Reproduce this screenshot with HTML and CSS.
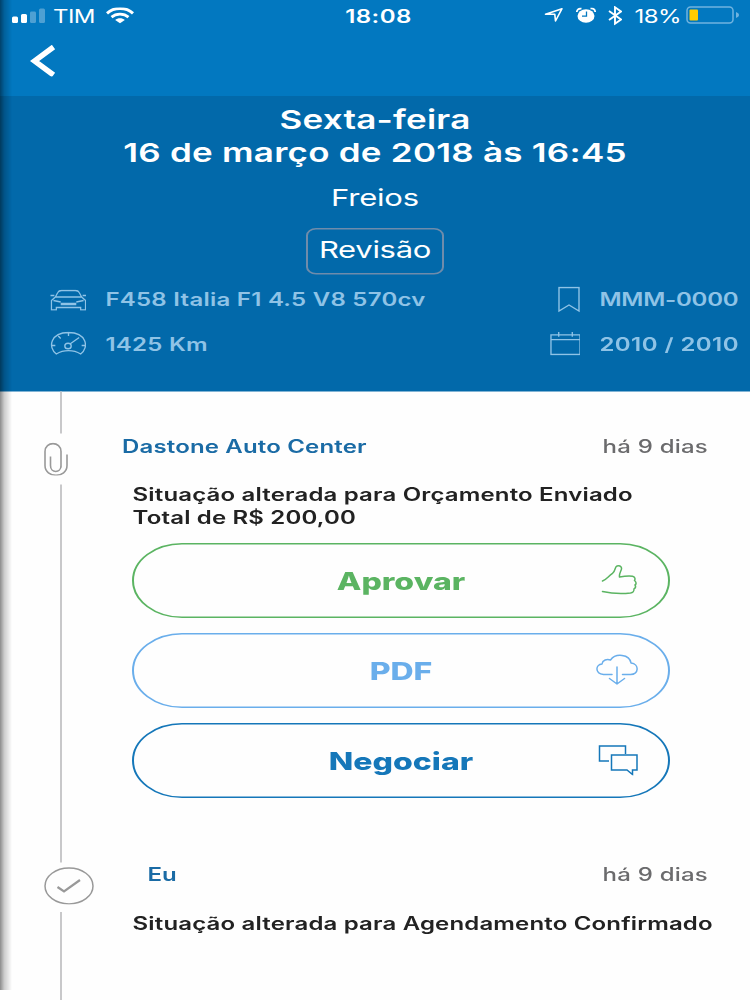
FILE: index.html
```html
<!DOCTYPE html>
<html lang="pt-BR">
<head>
    <meta charset="UTF-8">
    <meta name="viewport" content="width=device-width, initial-scale=1.0">
    <title>Agendamento</title>
    <link rel="stylesheet" href="styles.css">
</head>
<body>

<div class="screen">
    <div class="top">
        <div class="status-bar">
            <div class="status-left">
                <svg class="signal" viewBox="0 0 34 16" preserveAspectRatio="none" fill="#fff">
                    <rect x="0" y="9" width="6" height="6.5" rx="1.5"/>
                    <rect x="9" y="6.5" width="6" height="9" rx="1.5"/>
                    <rect x="18" y="4" width="6" height="11.5" rx="1.5" opacity=".3"/>
                    <rect x="27" y="1" width="6" height="14.5" rx="1.5" opacity=".3"/>
                </svg>
                <span class="carrier">TIM</span>
                <svg class="wifi" viewBox="0 0 28 16" preserveAspectRatio="none" fill="none" stroke="#fff">
                    <path d="M1 5.8C8-.6 20-.6 27 5.8" stroke-width="3"/>
                    <path d="M5.5 9.6c4.6-4 12.4-4 17 0" stroke-width="2.8"/>
                    <path d="M9.2 12.5c2.4-2.4 7.2-2.4 9.6 0L14 15.8z" fill="#fff" stroke="none"/>
                </svg>
            </div>
            <span class="time">18:08</span>
            <div class="status-right">
                <svg class="location" viewBox="0 0 20 15" preserveAspectRatio="none" fill="none" stroke="#fff" stroke-width="1.6" stroke-linejoin="round">
                    <path d="M1.5 6.7L18 1.2 11.5 13.5 10.8 6.8z"/>
                </svg>
                <svg class="alarm" viewBox="0 0 20 16" preserveAspectRatio="none">
                    <ellipse cx="10" cy="8.5" rx="8.5" ry="6.8" fill="#fff"/>
                    <path d="M.8 4.5C1 2 3 .8 5.5 1M19.2 4.5C19 2 17 .8 14.5 1" fill="none" stroke="#fff" stroke-width="1.8"/>
                    <path d="M10.5 4v4.700H6" fill="none" stroke="#0278c0" stroke-width="1.3"/>
                </svg>
                <svg class="bluetooth" viewBox="0 0 15 19" preserveAspectRatio="none" fill="none" stroke="#fff" stroke-width="1.9">
                    <path d="M1 5l12 8.5-6 4.2V1.3l6 4.2L1 14"/>
                </svg>
                <span class="percent">18%</span>
                <svg class="battery" viewBox="0 0 54 18" preserveAspectRatio="none">
                    <rect x="1" y="1" width="46" height="16" rx="3.5" fill="none" stroke="#70b3df" stroke-width="1.5"/>
                    <rect x="3.5" y="3.5" width="8.5" height="11" rx="1" fill="#fc0"/>
                    <path d="M50 6c4 1.5 4 4.5 0 6z" fill="#70b3df"/>
                </svg>
            </div>
        </div>
        <svg class="back" viewBox="0 0 25 32" preserveAspectRatio="none" fill="none" stroke="#fff" stroke-width="5.5">
            <path d="M23.5 2L4.5 16l19 14"/>
        </svg>
    </div>

    <div class="header">
        <h1><span>Sexta-feira</span><br><span>16 de março de 2018 às 16:45</span></h1>
        <p class="service">Freios</p>
        <div class="tag"><span>Revisão</span></div>
        <div class="info">
            <div class="info-icon">
                <svg class="car" viewBox="0 0 38 22" preserveAspectRatio="none" fill="none" stroke="currentColor" stroke-width="1.3">
                    <path d="M5.5 7.500L8 3Q9 1 12 1h14q3 0 4 2l2.500 4.500M5.500 7.500h27M5.500 7.500L1.500 11v9.500h5V18h25v2.500h5V11l-4-3.500M.5 6h4M33.500 6h4M3.500 11l7.500 1.500M34.500 11L27 12.500"/>
                    <path d="M11 14.500h16" stroke-width="2.4"/>
                </svg>
            </div>
            <span class="model">F458 Italia F1 4.5 V8 570cv</span>
            <div class="info-icon right">
                <svg class="bookmark" viewBox="0 0 22 26" preserveAspectRatio="none" fill="none" stroke="currentColor" stroke-width="1.4">
                    <path d="M1 1h20v23.5l-10-6-10 6z"/>
                </svg>
            </div>
            <span class="plate">MMM-0000</span>

            <div class="info-icon">
                <svg class="gauge" viewBox="0 0 38 24" preserveAspectRatio="none" fill="none" stroke="currentColor" stroke-width="1.4">
                    <path d="M6.500 22.500C-2.500 16 .5 1 19 1s21.500 15 12.500 21.500C24 18 14 18 6.500 22.500zM19 1v3.500M8.500 4.500l2.500 2.500M1.500 14h4M32.500 14h4M20.500 12.500L30 6"/>
                    <ellipse cx="18.5" cy="14.5" rx="3.3" ry="2.8"/>
                </svg>
            </div>
            <span class="km">1425 Km</span>
            <div class="info-icon right">
                <svg class="calendar" viewBox="0 0 32 25" preserveAspectRatio="none" fill="none" stroke="currentColor" stroke-width="1.4">
                    <path d="M1 3.500h30V24H1zM1 8.500h30M9 .5v5M23 .5v5"/>
                </svg>
            </div>
            <span class="year">2010 / 2010</span>
        </div>
    </div>

    <div class="timeline">
        <div class="item first">
            <div class="rail">
                <div class="line start"></div>
                <div class="rail-icon">
                    <svg class="clip" viewBox="0 0 24 34" preserveAspectRatio="none" fill="none" stroke="#999" stroke-width="1.6">
                        <path d="M17 25V9c0-10.500-16-10.500-16 0v14c0 13 22 13 22 0V12M17 23c0 8-10.500 8-10.500 0V14"/>
                    </svg>
                </div>
                <div class="line end"></div>
            </div>
            <div class="content">
                <div class="row">
                    <span class="author">Dastone Auto Center</span>
                    <span class="when">há 9 dias</span>
                </div>
                <p class="message"><span>Situação alterada para Orçamento Enviado</span><br><span>Total de R$ 200,00</span></p>
                <div class="actions">
                    <button class="btn approve">
                        <span>Aprovar</span>
                        <svg viewBox="0 0 42 32" preserveAspectRatio="none" fill="none" stroke="currentColor" stroke-width="1.5" stroke-linecap="round" stroke-linejoin="round">
                            <path d="M6.500 17C11 15.500 12 12.500 16.500 9.500 19.500 7.500 18.500 3 21 2c3.500-1 5.500 1.500 4 4.500-.6 1.500-2 4-1.500 6.500 5-.8 9-1.200 13-.7 2.500.4 3 2.700 2 4.200 2 1.500 2 3.500.5 4.500 1 1.600.5 3-1 4 0 2.500-.5 3.500-3.500 4-9 1-19 .5-28-1.500"/>
                        </svg>
                    </button>
                    <button class="btn pdf">
                        <span>PDF</span>
                        <svg viewBox="0 0 42 32" preserveAspectRatio="none" fill="none" stroke="currentColor" stroke-width="1.5" stroke-linecap="round" stroke-linejoin="round">
                            <path d="M16 20.500H7.500C-1.500 19.500-.5 10.500 6 10 6.500 6 11 4.500 14.500 6c5-7 19-6 20.500 3 8.500 1 8 11.500-.5 11.500h-8M21 13v17M13.500 24.500L21 30l7.500-5.500"/>
                        </svg>
                    </button>
                    <button class="btn talk">
                        <span>Negociar</span>
                        <svg viewBox="0 0 42 32" preserveAspectRatio="none" fill="none" stroke="currentColor" stroke-width="1.5">
                            <path d="M13 17H3.500V2h26v8M15.500 11H41v15h-4.500v4.500L31 26H15.500z"/>
                        </svg>
                    </button>
                </div>
            </div>
        </div>

        <div class="item second">
            <div class="rail">
                <div class="line start"></div>
                <div class="rail-icon">
                    <svg class="check" viewBox="0 0 50 38" preserveAspectRatio="none" fill="none" stroke="#999" stroke-width="1.5">
                        <ellipse cx="25" cy="19" rx="24" ry="18"/>
                        <path d="M13.500 20l6.500 4.500L36 13" stroke-width="2.2"/>
                    </svg>
                </div>
                <div class="line end"></div>
            </div>
            <div class="content">
                <div class="row">
                    <span class="author me">Eu</span>
                    <span class="when">há 9 dias</span>
                </div>
                <p class="message"><span>Situação alterada para Agendamento Confirmado</span></p>
            </div>
        </div>
    </div>
    <div class="edge"></div>
</div>

</body>
</html>
```
FILE: styles.css
```css
body {
    margin: 0;
    height: 1000px;
    overflow: hidden;
    background: #fefefe;
    font-family: Inter, "Liberation Sans", sans-serif;
}

/* 375pt wide phone layout, stretched to fill the window */
.screen {
    position: relative;
    width: 375px;
    height: 666.67px;
    display: flex;
    flex-direction: column;
    overflow: hidden;
    transform: scale(2, 1.5);
    transform-origin: 0 0;
}

svg {
    display: block;
    flex: none;
}

h1, p {
    margin: 0;
}

span {
    white-space: nowrap;
}

.top {
    height: 64px;
    background: #0278c0;
    flex: none;
}

.status-bar {
    display: flex;
    align-items: center;
    justify-content: space-between;
    height: 20.5px;
    padding: 0 5.5px 0 6px;
    color: #fff;
    font-size: 12px;
}

.status-left, .status-right {
    display: flex;
    align-items: center;
    width: 157px;
}

.status-right {
    justify-content: flex-end;
    width: 154px;
}

.signal {
    width: 17px;
    height: 10.67px;
}

.carrier {
    margin: 0 6px 0 3.5px;
    letter-spacing: -0.3px;
}

.wifi {
    width: 14px;
    height: 10.67px;
}

.time {
    font-weight: 600;
    letter-spacing: 0.2px;
}

.location {
    width: 10px;
    height: 10px;
    margin-right: 6.3px;
}

.alarm {
    width: 10px;
    height: 10.67px;
    margin-right: 5.5px;
}

.bluetooth {
    width: 7.5px;
    height: 12.67px;
    margin-right: 6px;
}

.percent {
    margin-right: 2px;
    letter-spacing: -0.3px;
}

.battery {
    width: 27px;
    height: 12px;
}

.back {
    width: 12.5px;
    height: 21.33px;
    margin: 9.5px 0 0 15px;
}

.header {
    box-sizing: border-box;
    height: 196.67px;
    padding-top: 5.4px;
    background: #0269aa;
    color: #fff;
    text-align: center;
    flex: none;
}

h1 {
    font-size: 17.5px;
    font-weight: 600;
    letter-spacing: 0.12px;
    line-height: 21.67px;
}

.service {
    margin-top: 8.6px;
    font-size: 15.5px;
    letter-spacing: -0.1px;
    line-height: 22px;
}

.tag {
    box-sizing: border-box;
    width: 68.5px;
    height: 31.33px;
    margin: 8.4px auto 0;
    border: 1px solid #6f8cab;
    border-radius: 5px;
    font-size: 15.5px;
    letter-spacing: -0.15px;
    line-height: 28.4px;
}

.info {
    display: grid;
    grid-template-columns: 28px 220px 27px 75px;
    grid-auto-rows: 29.2px;
    align-items: center;
    margin-top: 2.3px;
    padding-left: 24.7px;
    color: #8fc3e6;
    font-size: 12px;
    font-weight: 600;
    letter-spacing: 0.13px;
    text-align: left;
}

.plate {
    letter-spacing: -0.12px;
}

.year {
    letter-spacing: 0.22px;
}

.info-icon.right {
    display: flex;
    justify-content: flex-end;
    padding-right: 9.7px;
}

.car {
    width: 18.5px;
    height: 14.67px;
}

.gauge {
    width: 18.5px;
    height: 16px;
}

.bookmark {
    width: 11px;
    height: 17.33px;
}

.calendar {
    width: 15.5px;
    height: 16px;
}

.timeline {
    flex: 1;
    display: flex;
    flex-direction: column;
}

.item {
    display: flex;
}

.first {
    height: 299.33px;
    flex: none;
}

.second {
    flex: 1;
}

.rail {
    display: flex;
    flex-direction: column;
    width: 61px;
    flex: none;
}

.line {
    width: 1px;
    margin-left: 30.3px;
    background: #c8c8ca;
}

.line.start {
    height: 28.67px;
}

.second .line.start {
    height: 14.67px;
}

.line.end {
    flex: 1;
}

.rail-icon {
    display: flex;
    align-items: center;
    height: 33.33px;
    padding-left: 21.8px;
}

.second .rail-icon {
    height: 32px;
    padding-bottom: 1.5px;
}

.clip {
    width: 12px;
    height: 22.67px;
}

.check {
    width: 25px;
    height: 25.33px;
}

.content {
    width: 293px;
    padding-top: 27px;
}

.second .content {
    padding-top: 13px;
}

.row {
    display: flex;
    justify-content: space-between;
    font-size: 12px;
    font-weight: 600;
    letter-spacing: 0.08px;
    line-height: 20px;
}

.author {
    color: #1a6ba5;
}

.me {
    margin-left: 12.7px;
}

.when {
    color: #6b6b6d;
    font-weight: 500;
    letter-spacing: 0.11px;
}

.message {
    margin: 15.7px 0 0 5.3px;
    color: #222;
    font-size: 12px;
    font-weight: 600;
    letter-spacing: 0.08px;
    line-height: 14.67px;
}

.second .message {
    margin-top: 16px;
}

.actions {
    display: flex;
    flex-direction: column;
    gap: 10.33px;
    width: 269px;
    margin: 9.3px 0 0 5px;
}

.btn {
    position: relative;
    height: 49.67px;
    padding: 0;
    background: none;
    border: 1px solid currentColor;
    border-radius: 25px;
    font-family: inherit;
    font-size: 16px;
    font-weight: 800;
}

.btn svg {
    position: absolute;
    right: 15.3px;
    top: 13px;
    width: 21px;
    height: 21.33px;
}

.approve {
    color: #5bb462;
}

.pdf {
    color: #6aaeeb;
}

.talk {
    color: #1577b9;
}

/* shadow of the previous screen */
.edge {
    position: absolute;
    left: 0;
    top: 0;
    width: 6px;
    height: 660px;
    background: linear-gradient(to right, rgba(0, 0, 0, 0.45), rgba(0, 0, 0, 0.2) 35%, rgba(0, 0, 0, 0));
}
```
